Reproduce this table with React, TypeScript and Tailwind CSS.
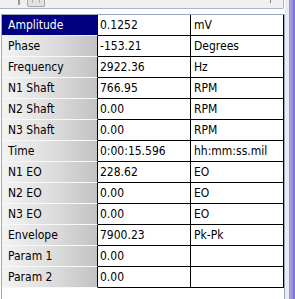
import React from "react";

const rows: [string, string, string][] = [
  ["Amplitude", "0.1252", "mV"],
  ["Phase", "-153.21", "Degrees"],
  ["Frequency", "2922.36", "Hz"],
  ["N1 Shaft", "766.95", "RPM"],
  ["N2 Shaft", "0.00", "RPM"],
  ["N3 Shaft", "0.00", "RPM"],
  ["Time", "0:00:15.596", "hh:mm:ss.mil"],
  ["N1 EO", "228.62", "EO"],
  ["N2 EO", "0.00", "EO"],
  ["N3 EO", "0.00", "EO"],
  ["Envelope", "7900.23", "Pk-Pk"],
  ["Param 1", "0.00", ""],
  ["Param 2", "0.00", ""],
];

export default function App() {
  return (
    <div
      className="w-[295px] h-[299px] bg-white flex overflow-hidden text-[12px] text-black font-stretch-condensed"
      style={{ fontFamily: "'DejaVu Sans Condensed', 'DejaVu Sans', sans-serif" }}
    >
      <div className="w-[285px] flex flex-col shrink-0">
        <div className="h-[9px] w-[284px] bg-[#f0f0f0] border-b border-r border-[#a7b4c6] rounded-br-[2px] flex items-start pl-[18px]">
          <div className="w-[2px] h-[5px] bg-[#9a9a9a]" />
          <div className="ml-[7px] w-[18px] h-[7px] border border-t-0 border-[#a5a5a5] rounded-b-[2px] bg-[#e2e2e2] flex justify-center items-start">
            <div className="w-[8px] h-[3px] border-x border-[#b0b0b0]" />
          </div>
          <div className="ml-auto mr-[12px] w-px h-[3px] bg-[#8a8a8a]" />
        </div>
        <div className="h-[5px]" />
        <div className="ml-[1px] w-[284px] flex-1 border-l border-t border-r border-[#93aac4]">
          {rows.map(([label, value, unit], i) => (
            <div key={label} className="flex h-[21px]">
              <div
                className={
                  i === 0
                    ? "w-[96px] h-[21px] bg-[#000080] text-white border-r border-r-black border-b border-b-[#e8e8e8] pl-[6px] flex items-center leading-none"
                    : "w-[96px] h-[21px] bg-[linear-gradient(to_right,#f3f3f3,#dcdcdc_55%,#c2c2c2)] border-r border-r-black border-b border-b-[#f8f8f8] pl-[6px] flex items-center leading-none"
                }
              >
                {label}
              </div>
              <div className="w-[93px] h-[21px] border-r border-b border-black pl-[2px] flex items-center leading-none">
                {value}
              </div>
              <div className="w-[93px] h-[21px] border-r border-b border-black pl-[3px] flex items-center leading-none">
                {unit}
              </div>
            </div>
          ))}
        </div>
      </div>
      <div className="w-[4px] bg-[#ececef]" />
      <div className="w-px bg-[#9c9cac]" />
      <div className="w-[5px] bg-[linear-gradient(to_right,#aaa7e6,#8f8bdc_50%,#6f6bc8)]" />
    </div>
  );
}
